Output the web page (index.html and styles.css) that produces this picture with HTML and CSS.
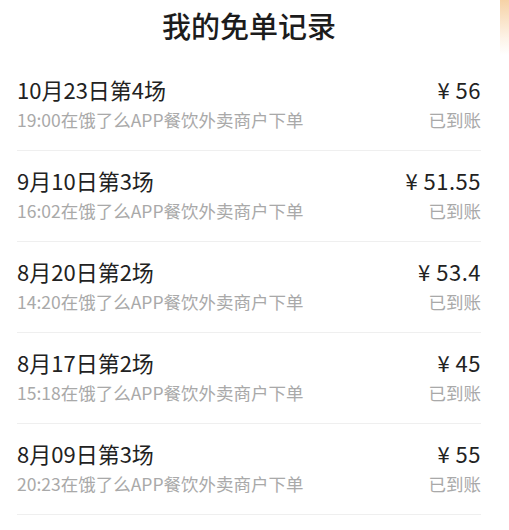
FILE: index.html
```html
<!DOCTYPE html>
<html lang="zh">
<head>
  <meta charset="UTF-8" />
  <meta name="viewport" content="width=device-width, initial-scale=1.0"/>
  <title>我的免单记录</title>
  <link rel="stylesheet" href="styles.css">
</head>
<body>
  <div class="glow"></div>
  <div class="container">
    <h1>我的免单记录</h1>

    <div class="record">
      <div class="line">
        <span class="name">10月23日第4场</span>
        <span class="amount">¥ 56</span>
      </div>
      <div class="line sub">
        <span>19:00在饿了么APP餐饮外卖商户下单</span>
        <span>已到账</span>
      </div>
    </div>

    <div class="record">
      <div class="line">
        <span class="name">9月10日第3场</span>
        <span class="amount">¥ 51.55</span>
      </div>
      <div class="line sub">
        <span>16:02在饿了么APP餐饮外卖商户下单</span>
        <span>已到账</span>
      </div>
    </div>

    <div class="record">
      <div class="line">
        <span class="name">8月20日第2场</span>
        <span class="amount">¥ 53.4</span>
      </div>
      <div class="line sub">
        <span>14:20在饿了么APP餐饮外卖商户下单</span>
        <span>已到账</span>
      </div>
    </div>

    <div class="record">
      <div class="line">
        <span class="name">8月17日第2场</span>
        <span class="amount">¥ 45</span>
      </div>
      <div class="line sub">
        <span>15:18在饿了么APP餐饮外卖商户下单</span>
        <span>已到账</span>
      </div>
    </div>

    <div class="record">
      <div class="line">
        <span class="name">8月09日第3场</span>
        <span class="amount">¥ 55</span>
      </div>
      <div class="line sub">
        <span>20:23在饿了么APP餐饮外卖商户下单</span>
        <span>已到账</span>
      </div>
    </div>
  </div>
</body>
</html>
```

FILE: styles.css
```css
body {
  font-family: "Noto Sans CJK SC", "Noto Sans", sans-serif;
  margin: 0;
  padding: 0;
  background: #fff;
  color: #222;
  overflow: hidden;
}
.glow {
  position: absolute;
  top: 0;
  right: 0;
  width: 9px;
  height: 55px;
  background: linear-gradient(to bottom, #f6d2a6, rgba(250, 226, 198, 0.4) 70%, rgba(255, 255, 255, 0));
}
.container {
  padding: 0 28px 0 17px;
}
h1 {
  margin: 0;
  padding: 5px 0 15px;
  line-height: 40px;
  font-size: 29px;
  font-weight: 500;
  text-align: center;
  color: #1c1c1c;
}
.record {
  padding: 14px 0 18px;
  border-bottom: 1px solid #efefef;
}
.line {
  display: flex;
  justify-content: space-between;
  line-height: 30px;
  font-size: 22px;
}
.amount { letter-spacing: 0.5px; }
.sub {
  margin-top: 4px;
  line-height: 24px;
  font-size: 17.5px;
  color: #a9a9a9;
}
```
